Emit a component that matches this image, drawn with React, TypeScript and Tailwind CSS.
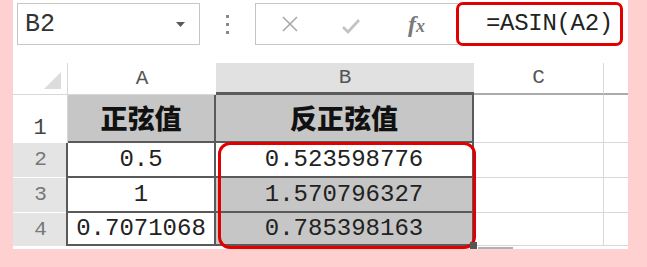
import React from "react";

const mono = { fontFamily: '"Liberation Mono", "DejaVu Sans Mono", monospace' };
const cjk = { fontFamily: '"Noto Sans CJK SC", "Noto Sans", sans-serif' };

export default function App() {
  return (
    <div className="relative w-[647px] h-[267px] bg-[#ffd0d0] overflow-hidden">
      <div className="ml-[13px] w-[615px] h-[249px] bg-white flex flex-col">
        {/* Toolbar */}
        <div className="h-[63px] flex items-start">
          <div className="ml-[4px] mt-[3px] w-[183px] h-[42px] border border-[#c6c6c6] bg-white flex items-center justify-between pl-[7px] pr-[14px]">
            <span className="text-[25px] text-[#333] leading-none" style={mono}>B2</span>
            <svg width="9" height="5" viewBox="0 0 9 5">
              <polygon points="0,0 9,0 4.5,5" fill="#5a5a5a" />
            </svg>
          </div>
          <div className="ml-[26px] mt-[15px] flex flex-col gap-[5px]">
            <div className="w-[3px] h-[3px] bg-[#8a8a8a]" />
            <div className="w-[3px] h-[3px] bg-[#8a8a8a]" />
            <div className="w-[3px] h-[3px] bg-[#8a8a8a]" />
          </div>
          <div className="ml-[26px] mt-[3px] w-[203px] h-[42px] border border-[#c6c6c6] border-r-0 bg-white flex items-center pl-[26px]">
            <svg width="16" height="16" viewBox="0 0 16 16">
              <line x1="1" y1="1" x2="15" y2="15" stroke="#a8a8a8" strokeWidth="1.6" />
              <line x1="15" y1="1" x2="1" y2="15" stroke="#a8a8a8" strokeWidth="1.6" />
            </svg>
            <svg className="ml-[44px] mt-[4px]" width="18" height="15" viewBox="0 0 18 15">
              <polyline points="1,8 6,13 17,1" fill="none" stroke="#c2c2c2" strokeWidth="2.6" />
            </svg>
            <span
              className="ml-[48px] text-[#7a7a7a] italic font-bold leading-none"
              style={{ fontFamily: '"Liberation Serif", "DejaVu Serif", serif' }}
            >
              <span className="text-[24px]">f</span>
              <span className="text-[18px]">x</span>
            </span>
          </div>
          <div className="-ml-[2px] mt-[2px] w-[167px] h-[44px] border-[3px] border-[#e00000] rounded-[7px] bg-white flex items-center pl-[27px]">
            <span className="text-[24px] text-[#222] leading-none tracking-[-0.3px]" style={mono}>=ASIN(A2)</span>
          </div>
        </div>

        {/* Grid */}
        <div className="grid grid-cols-[55px_148px_258px_130px_24px] grid-rows-[32px_48px_35px_35px_33px]">
          {/* Header row */}
          <div className="relative bg-white border-r border-b border-[#d8d8d8]">
            <svg className="absolute right-[6px] bottom-[5px]" width="17" height="17" viewBox="0 0 17 17">
              <polygon points="17,0 17,17 0,17" fill="#dcdcdc" />
            </svg>
          </div>
          <div className="bg-white border-b border-[#d8d8d8] flex items-center justify-center text-[21px] text-[#555]" style={mono}>A</div>
          <div className="bg-[#e1e1e1] border-b-[3px] border-[#5d5d5d] flex items-center justify-center text-[21px] text-[#555]" style={mono}>B</div>
          <div className="bg-white border-b-2 border-r border-b-[#ababab] border-r-[#d8d8d8] flex items-center justify-center text-[21px] text-[#555]" style={mono}>C</div>
          <div className="bg-white border-b-2 border-[#ababab]" />

          {/* Row 1 */}
          <div className="bg-white border-r border-[#d8d8d8] flex items-end justify-center pb-[3px] text-[22px] text-[#444] leading-none" style={mono}>1</div>
          <div className="bg-[#c6c6c6] border-r-2 border-b-2 border-[#5a5a5a] flex items-center justify-center text-[27px] font-black text-[#111]" style={cjk}>正弦值</div>
          <div className="bg-[#c6c6c6] border-r-2 border-b-2 border-[#5a5a5a] flex items-center justify-center text-[27px] font-black text-[#111]" style={cjk}>反正弦值</div>
          <div className="bg-white border-r border-b border-[#d8d8d8]" />
          <div className="bg-white border-b border-[#d8d8d8]" />

          {/* Row 2 */}
          <div className="bg-[#e4e4e4] border-b border-white flex items-center justify-center text-[21px] text-[#777]" style={mono}>2</div>
          <div className="bg-white border-l-2 border-r-2 border-b-2 border-[#5a5a5a] -ml-[2px] flex items-center justify-center text-[24px] text-[#222]" style={mono}>0.5</div>
          <div className="bg-white border-r-2 border-b-2 border-[#5a5a5a] flex items-center justify-center text-[24px] text-[#222]" style={mono}>0.523598776</div>
          <div className="bg-white border-r border-b border-[#d8d8d8]" />
          <div className="bg-white border-b border-[#d8d8d8]" />

          {/* Row 3 */}
          <div className="bg-[#e4e4e4] border-b border-white flex items-center justify-center text-[21px] text-[#777]" style={mono}>3</div>
          <div className="bg-white border-l-2 border-r-2 border-b-2 border-[#5a5a5a] -ml-[2px] flex items-center justify-center text-[24px] text-[#222]" style={mono}>1</div>
          <div className="bg-[#c6c6c6] border-r-2 border-b-2 border-[#5a5a5a] flex items-center justify-center text-[24px] text-[#222]" style={mono}>1.570796327</div>
          <div className="bg-white border-r border-b border-[#d8d8d8]" />
          <div className="bg-white border-b border-[#d8d8d8]" />

          {/* Row 4 */}
          <div className="bg-[#e4e4e4] flex items-center justify-center text-[21px] text-[#777]" style={mono}>4</div>
          <div className="bg-white border-l-2 border-r-2 border-b-2 border-[#5a5a5a] -ml-[2px] flex items-center justify-center text-[24px] text-[#222]" style={mono}>0.7071068</div>
          <div className="bg-[#c6c6c6] border-r-2 border-b-2 border-[#5a5a5a] flex items-center justify-center text-[24px] text-[#222]" style={mono}>0.785398163</div>
          <div className="bg-white border-r border-b border-[#d8d8d8]" />
          <div className="bg-white border-b border-[#d8d8d8]" />
        </div>
      </div>

      {/* Red highlight around B2:B4 */}
      <div className="absolute left-[218px] top-[142px] w-[258px] h-[107px] border-[3px] border-[#e00000] rounded-[12px] pointer-events-none" />
      {/* Fill handle */}
      <div className="absolute left-[470px] top-[242px] w-[7px] h-[7px] bg-[#555]" />
      <div className="absolute left-[478px] top-[247px] w-[35px] h-[2px] bg-[#b0b0b0]" />
    </div>
  );
}
